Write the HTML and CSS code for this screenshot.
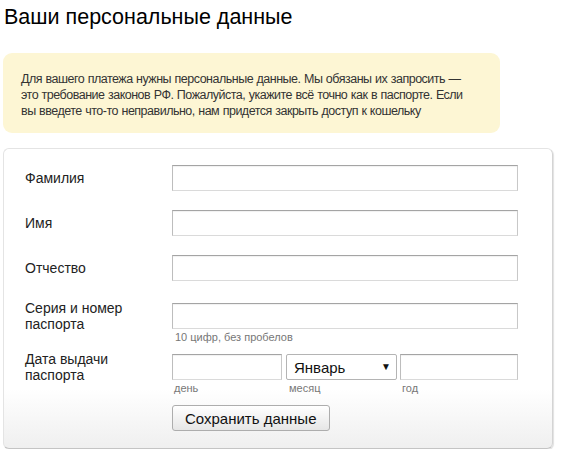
FILE: index.html
```html
<!DOCTYPE html>
<html lang="ru">
<head>
  <meta charset="UTF-8" />
  <meta name="viewport" content="width=device-width, initial-scale=1.0"/>
  <title>Ваши персональные данные</title>
  <link rel="stylesheet" href="styles.css">
</head>
<body>
  <h1 class="title">Ваши персональные данные</h1>

  <div class="notice">
    Для вашего платежа нужны персональные данные. Мы обязаны их запросить —<br>
    это требование законов РФ. Пожалуйста, укажите всё точно как в паспорте. Если<br>
    вы введете что-то неправильно, нам придется закрыть доступ к кошельку
  </div>

  <form class="card">
    <div class="row">
      <label class="label" for="lastName">Фамилия</label>
      <input class="field" type="text" id="lastName">
    </div>

    <div class="row">
      <label class="label" for="firstName">Имя</label>
      <input class="field" type="text" id="firstName">
    </div>

    <div class="row row-wide">
      <label class="label" for="middleName">Отчество</label>
      <input class="field" type="text" id="middleName">
    </div>

    <div class="row row-hinted">
      <label class="label label-two" for="passport">Серия и номер<br>паспорта</label>
      <input class="field" type="text" id="passport">
      <div class="hint">10 цифр, без пробелов</div>
    </div>

    <div class="row row-hinted">
      <label class="label label-two" for="day">Дата выдачи<br>паспорта</label>
      <div class="date">
        <input class="field day" type="text" id="day">
        <div class="select-wrap">
          <select class="field month" id="month">
            <option>Январь</option>
            <option>Февраль</option>
            <option>Март</option>
            <option>Апрель</option>
            <option>Май</option>
            <option>Июнь</option>
            <option>Июль</option>
            <option>Август</option>
            <option>Сентябрь</option>
            <option>Октябрь</option>
            <option>Ноябрь</option>
            <option>Декабрь</option>
          </select>
          <span class="arrow">▼</span>
        </div>
        <input class="field year" type="text" id="year">
      </div>
      <div class="date-hints">
        <span class="hint day">день</span>
        <span class="hint month">месяц</span>
        <span class="hint year">год</span>
      </div>
    </div>

    <div class="actions">
      <button class="save" type="button">Сохранить данные</button>
    </div>
  </form>
</body>
</html>
```

FILE: styles.css
```css
body {
  font-family: Arial, 'Liberation Sans', sans-serif;
  margin: 0;
  padding: 0 24px 0 3px;
  color: #222;
  background: #fff;
}

.title {
  margin: 0;
  padding: 5px 0 0 1px;
  font-size: 21.5px;
  font-weight: normal;
  line-height: 25px;
  color: #000;
}

.notice {
  margin-top: 23px;
  width: 461px;
  padding: 18px 18px 14px 18px;
  background-color: #fdf6d4;
  border-radius: 9px;
  font-size: 12.5px;
  letter-spacing: -0.5px;
  word-spacing: 0.5px;
  line-height: 16px;
  white-space: nowrap;
  color: #333;
}

.card {
  margin-top: 15px;
  width: 509px;
  padding: 16px 18px 17px 21px;
  background: linear-gradient(to bottom, #fff 0, #fff 240px, #efefef 100%);
  border: 1px solid #e4e4e4;
  border-bottom-color: #c4c4c4;
  border-right-color: #d4d4d4;
  border-radius: 6px;
  box-shadow: 1px 1px 1px rgba(0, 0, 0, 0.12);
}

.row {
  display: grid;
  grid-template-columns: 147px 346px;
  margin-bottom: 19px;
}

.row-wide {
  margin-bottom: 22px;
}

.row-hinted {
  margin-bottom: 10px;
}

.label {
  grid-column: 1;
  grid-row: 1;
  align-self: center;
  font-size: 14px;
  line-height: 16px;
  color: #222;
}

.label-two {
  margin: -3px 0;
}

.field {
  box-sizing: border-box;
  display: block;
  height: 26px;
  margin: 0;
  padding: 2px 6px;
  font-family: Arial, 'Liberation Sans', sans-serif;
  font-size: 15px;
  background: #fff;
  border: 1px solid;
  border-color: #a4a4a4 #c8c8c8 #dadada #bdbdbd;
  border-radius: 0;
  box-shadow: inset 0 1px 1px rgba(0, 0, 0, 0.06);
}

.row > .field {
  width: 346px;
}

.hint {
  grid-column: 2;
  margin-top: 2px;
  padding-left: 3px;
  font-size: 11px;
  line-height: 13px;
  color: #777;
}

.date {
  grid-column: 2;
  display: flex;
  gap: 4px;
}

.date .day {
  width: 110px;
}

.select-wrap {
  position: relative;
  width: 111px;
  margin-right: -1px;
}

.date .month {
  width: 111px;
  height: 26px;
  padding: 2px 7px;
  appearance: none;
  -webkit-appearance: none;
  border-color: #b4b4b4;
  border-radius: 2px;
  box-shadow: none;
  color: #111;
}

.arrow {
  position: absolute;
  top: 7px;
  right: 6px;
  font-size: 10px;
  color: #111;
  pointer-events: none;
}

.date .year {
  width: 118px;
}

.date-hints {
  grid-column: 2;
  display: flex;
}

.date-hints .hint {
  padding-left: 2px;
}

.date-hints .day {
  width: 112px;
}

.date-hints .month {
  width: 111px;
  padding-left: 3px;
}

.actions {
  padding-left: 147px;
}

.save {
  display: block;
  height: 26px;
  padding: 0 12px;
  font-family: Arial, 'Liberation Sans', sans-serif;
  font-size: 15px;
  color: #111;
  background: linear-gradient(to bottom, #fff, #e6e6e6);
  border: 1px solid #adadad;
  border-radius: 3px;
  cursor: pointer;
}
```
